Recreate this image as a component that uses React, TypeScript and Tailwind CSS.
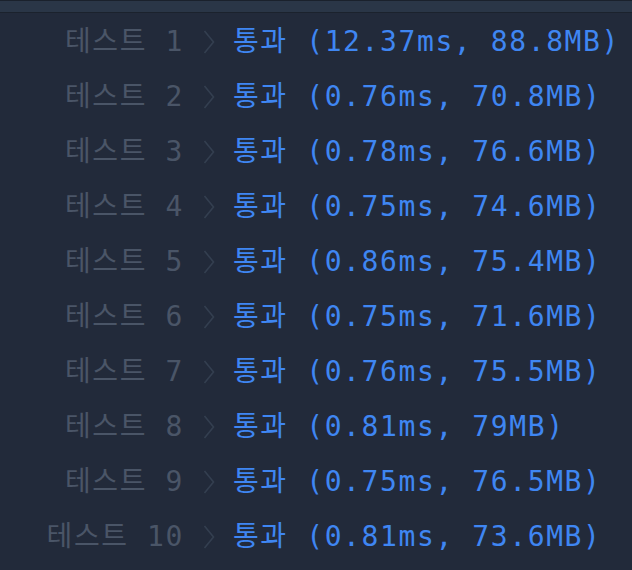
import React from 'react';

interface TestResult {
  no: number;
  time: string;
  memory: string;
}

const results: TestResult[] = [
  { no: 1, time: '12.37ms', memory: '88.8MB' },
  { no: 2, time: '0.76ms', memory: '70.8MB' },
  { no: 3, time: '0.78ms', memory: '76.6MB' },
  { no: 4, time: '0.75ms', memory: '74.6MB' },
  { no: 5, time: '0.86ms', memory: '75.4MB' },
  { no: 6, time: '0.75ms', memory: '71.6MB' },
  { no: 7, time: '0.76ms', memory: '75.5MB' },
  { no: 8, time: '0.81ms', memory: '79MB' },
  { no: 9, time: '0.75ms', memory: '76.5MB' },
  { no: 10, time: '0.81ms', memory: '73.6MB' },
];

function Chevron () {
  return (
    <svg width="12" height="24" viewBox="0 0 12 24" className="shrink-0">
      <polyline
        points="1.5,1 10.5,12 1.5,23"
        fill="none"
        stroke="#343f50"
        strokeWidth="1.6"
      />
    </svg>
  );
}

function ResultRow ({ result }: { result: TestResult }) {
  return (
    <div className="flex h-[55px] items-center whitespace-pre">
      <span className="w-[184px] text-right text-[#4a5567]">
        테스트 {result.no}
      </span>
      <span className="ml-[19px] flex items-center">
        <Chevron />
      </span>
      <span className="ml-[18px] text-[#3f86f2]">
        통과 ({result.time}, {result.memory})
      </span>
    </div>
  );
}

export default function App () {
  return (
    <div className="h-[570px] w-[632px] overflow-hidden bg-[#222a3a] font-['DejaVu_Sans_Mono','Noto_Sans_CJK_KR',monospace] text-[28px] tracking-[1.6px]">
      <div className="h-[13px] border-t border-b border-t-[#1a212c] border-b-[#1b222d] bg-[#2a3647]" />
      <div className="pt-px">
        {results.map((result) => (
          <ResultRow key={result.no} result={result} />
        ))}
      </div>
    </div>
  );
}
